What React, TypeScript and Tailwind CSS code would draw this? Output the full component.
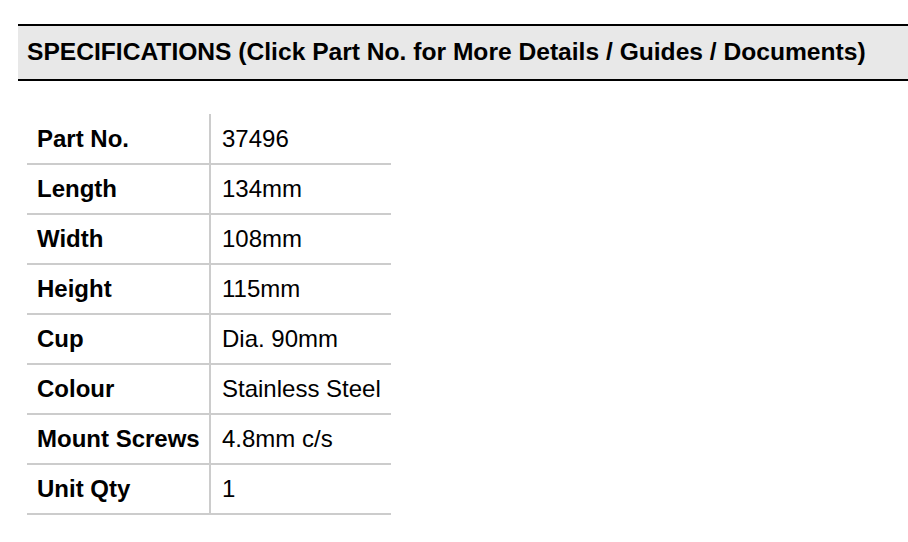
import React from 'react';

const specs: [string, string][] = [
  ['Part No.', '37496'],
  ['Length', '134mm'],
  ['Width', '108mm'],
  ['Height', '115mm'],
  ['Cup', 'Dia. 90mm'],
  ['Colour', 'Stainless Steel'],
  ['Mount Screws', '4.8mm c/s'],
  ['Unit Qty', '1'],
];

export default function App() {
  return (
    <div className="min-h-screen bg-white pt-[24px] pl-[18px] text-black font-['Liberation_Sans',Arial,sans-serif]">
      {/* Section header */}
      <div className="h-[57px] flex items-center pl-[9px] bg-[#e8e8e8] border-t-2 border-b-2 border-black">
        <h2 className="text-[24.6px] font-bold leading-none whitespace-nowrap">
          SPECIFICATIONS (Click Part No. for More Details / Guides / Documents)
        </h2>
      </div>

      {/* Spec table */}
      <table className="mt-[33px] ml-[9px] border-collapse text-[24px]">
        <tbody>
          {specs.map(([label, value]) => (
            <tr key={label} className="h-[50px] border-b-2 border-[#cccccc]">
              <td className="w-[183px] pl-[10px] pr-[2px] font-bold border-r-2 border-[#cccccc] whitespace-nowrap">
                {label}
              </td>
              <td className="w-[181px] pl-[11px] whitespace-nowrap">{value}</td>
            </tr>
          ))}
        </tbody>
      </table>
    </div>
  );
}
